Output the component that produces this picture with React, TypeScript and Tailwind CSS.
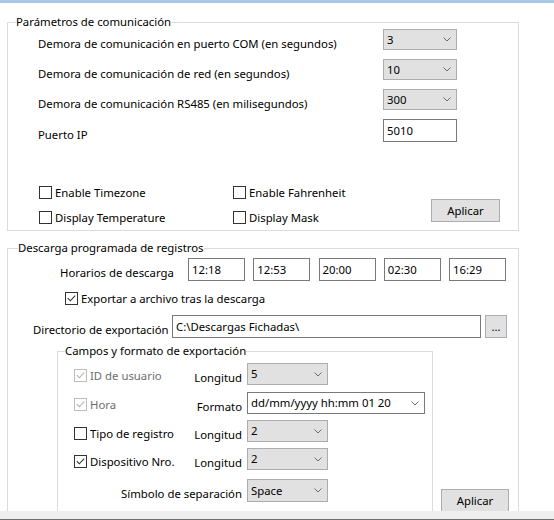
import React from 'react';

const Chevron = () => (
  <svg width="8" height="5" viewBox="0 0 8 5" className="shrink-0">
    <path d="M0.5 0.5L4 4L7.5 0.5" fill="none" stroke="#6b6b6b" strokeWidth="1" />
  </svg>
);

function Combo({ value, cls }: { value: string; cls: string }) {
  return (
    <div className={`flex items-center justify-between pl-[3px] pr-[5px] border shrink-0 ${cls}`}>
      <span className="leading-[16px] whitespace-nowrap">{value}</span>
      <Chevron />
    </div>
  );
}

function TextBox({ value, cls }: { value: string; cls: string }) {
  return (
    <div className={`flex items-center pl-[3px] bg-white border border-[#7a7a7a] shrink-0 ${cls}`}>
      <span className="leading-[16px] whitespace-nowrap">{value}</span>
    </div>
  );
}

function Check({ checked, disabled }: { checked?: boolean; disabled?: boolean }) {
  return (
    <span
      className={`w-[13px] h-[13px] border bg-white flex items-center justify-center shrink-0 ${
        disabled ? 'border-[#bcbcbc]' : 'border-[#333333]'
      }`}
    >
      {checked && (
        <svg width="11" height="11" viewBox="0 0 11 11">
          <path
            d="M1.8 5.2L4.3 7.8L9.2 2.6"
            fill="none"
            stroke={disabled ? '#b0b0b0' : '#333333'}
            strokeWidth="1.1"
          />
        </svg>
      )}
    </span>
  );
}

function CheckItem({ label, checked, disabled }: { label: string; checked?: boolean; disabled?: boolean }) {
  return (
    <div className="flex items-center gap-[3px] h-[13px]">
      <Check checked={checked} disabled={disabled} />
      <span className={`leading-[13px] whitespace-nowrap ${disabled ? 'text-[#6d6d6d]' : 'text-black'}`}>{label}</span>
    </div>
  );
}

function Button({ label, cls }: { label: string; cls: string }) {
  return (
    <div className={`flex items-center justify-center bg-[#e1e1e1] border border-[#adadad] shrink-0 ${cls}`}>
      <span className="leading-[16px]">{label}</span>
    </div>
  );
}

function Row1({ label, children, pt }: { label: string; children: React.ReactNode; pt?: string }) {
  return (
    <div className="flex h-[30px] items-start">
      <div className={`w-[375px] pl-[30px] whitespace-nowrap leading-[16px] ${pt ?? 'pt-[7px]'}`}>{label}</div>
      {children}
    </div>
  );
}

export default function App() {
  const grayCombo = 'bg-[#e1e1e1] border-[#adadad]';
  return (
    <div className="w-[554px] h-[520px] bg-white flex flex-col overflow-hidden text-[11.35px] leading-[16px] text-black font-['Noto_Sans',sans-serif]">
      <div className="h-[3px] bg-[#a9c7e8] shrink-0" />
      <div className="h-[508px] overflow-hidden shrink-0">
        {/* Group 1 */}
        <fieldset className="ml-[7px] mt-[11px] w-[512px] h-[217px] border border-[#dcdcdc] p-0">
          <legend className="ml-[8px] leading-[16px]">Parámetros de comunicación</legend>
          <div className="-mt-[1px] flex flex-col">
            <Row1 label="Demora de comunicación en puerto COM (en segundos)">
              <Combo value="3" cls={`w-[74px] h-[21px] ${grayCombo}`} />
            </Row1>
            <Row1 label="Demora de comunicación de red (en segundos)">
              <Combo value="10" cls={`w-[74px] h-[21px] ${grayCombo}`} />
            </Row1>
            <Row1 label="Demora de comunicación RS485 (en milisegundos)">
              <Combo value="300" cls={`w-[74px] h-[21px] ${grayCombo}`} />
            </Row1>
            <Row1 label="Puerto IP" pt="pt-[8px]">
              <TextBox value="5010" cls="w-[74px] h-[23px]" />
            </Row1>
            <div className="mt-[37px] flex items-start">
              <div className="w-[225px] pl-[31px] flex flex-col gap-[12px]">
                <CheckItem label="Enable Timezone" />
                <CheckItem label="Display Temperature" />
              </div>
              <div className="w-[198px] flex flex-col gap-[12px]">
                <CheckItem label="Enable Fahrenheit" />
                <CheckItem label="Display Mask" />
              </div>
              <Button label="Aplicar" cls="mt-[13px] w-[69px] h-[23px]" />
            </div>
          </div>
        </fieldset>

        {/* Group 2 */}
        <fieldset className="ml-[7px] mt-[9px] w-[512px] h-[300px] border border-[#dcdcdc] p-0">
          <legend className="ml-[10px] leading-[16px]">Descarga programada de registros</legend>
          <div className="flex flex-col">
            <div className="mt-[2px] flex items-start">
              <div className="w-[180px] pl-[52px] pt-[7px] whitespace-nowrap">Horarios de descarga</div>
              <div className="flex gap-[8.25px]">
                <TextBox value="12:18" cls="w-[57px] h-[23px]" />
                <TextBox value="12:53" cls="w-[57px] h-[23px]" />
                <TextBox value="20:00" cls="w-[57px] h-[23px]" />
                <TextBox value="02:30" cls="w-[57px] h-[23px]" />
                <TextBox value="16:29" cls="w-[57px] h-[23px]" />
              </div>
            </div>
            <div className="mt-[11px] pl-[57px]">
              <CheckItem label="Exportar a archivo tras la descarga" checked />
            </div>
            <div className="mt-[10px] flex items-start">
              <div className="w-[164px] pl-[25px] pt-[7px] whitespace-nowrap">Directorio de exportación</div>
              <TextBox value="C:\Descargas Fichadas\" cls="w-[309px] h-[23px]" />
              <Button label="..." cls="ml-[4px] w-[22px] h-[23px]" />
            </div>
            <div className="mt-[5px] flex items-start">
              <fieldset className="ml-[49px] w-[376px] h-[200px] border border-[#dcdcdc] p-0 shrink-0">
                <legend className="ml-[7px] leading-[16px]">Campos y formato de exportación</legend>
                <div className="mt-[4px] flex flex-col">
                  <div className="h-[29px] flex items-start">
                    <div className="w-[136px] pl-[16px] pt-[6px]">
                      <CheckItem label="ID de usuario" checked disabled />
                    </div>
                    <div className="w-[48px] text-right pt-[7px] whitespace-nowrap">Longitud</div>
                    <Combo value="5" cls={`ml-[5px] w-[81px] h-[22px] ${grayCombo}`} />
                  </div>
                  <div className="h-[28px] flex items-start">
                    <div className="w-[136px] pl-[16px] pt-[6px]">
                      <CheckItem label="Hora" checked disabled />
                    </div>
                    <div className="w-[48px] text-right pt-[7px] whitespace-nowrap">Formato</div>
                    <Combo value="dd/mm/yyyy hh:mm 01 20" cls="ml-[5px] w-[178px] h-[22px] bg-white border-[#7a7a7a]" />
                  </div>
                  <div className="h-[28px] flex items-start">
                    <div className="w-[136px] pl-[16px] pt-[7px]">
                      <CheckItem label="Tipo de registro" />
                    </div>
                    <div className="w-[48px] text-right pt-[7px] whitespace-nowrap">Longitud</div>
                    <Combo value="2" cls={`ml-[5px] w-[81px] h-[22px] ${grayCombo}`} />
                  </div>
                  <div className="h-[31px] flex items-start">
                    <div className="w-[136px] pl-[16px] pt-[7px]">
                      <CheckItem label="Dispositivo Nro." checked />
                    </div>
                    <div className="w-[48px] text-right pt-[7px] whitespace-nowrap">Longitud</div>
                    <Combo value="2" cls={`ml-[5px] w-[81px] h-[22px] ${grayCombo}`} />
                  </div>
                  <div className="flex items-start">
                    <div className="w-[184px] text-right pt-[7px] whitespace-nowrap">Símbolo de separación</div>
                    <Combo value="Space" cls={`ml-[5px] w-[81px] h-[23px] ${grayCombo}`} />
                  </div>
                </div>
              </fieldset>
              <Button label="Aplicar" cls="ml-[8px] mt-[146px] w-[68px] h-[23px]" />
            </div>
          </div>
        </fieldset>
      </div>
      <div className="h-[8px] bg-[#efefef] shrink-0" />
      <div className="h-[1px] bg-[#6e6e6e] shrink-0" />
    </div>
  );
}
